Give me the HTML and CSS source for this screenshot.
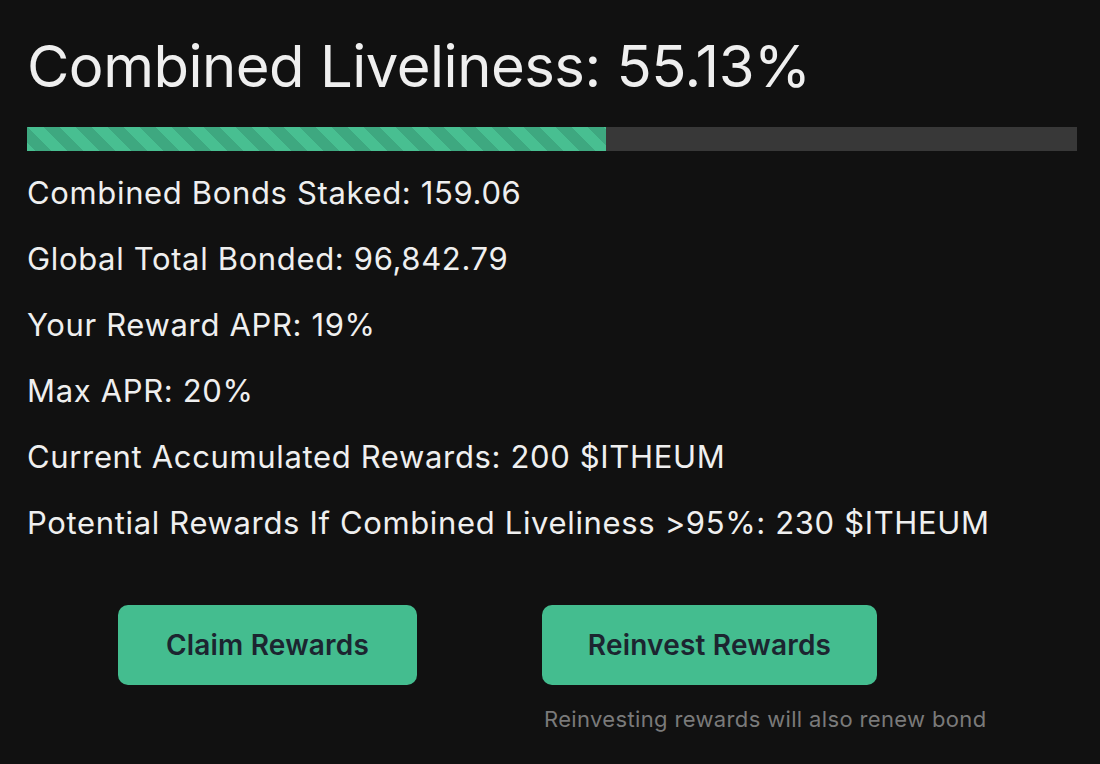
FILE: index.html
```html
<!DOCTYPE html>
<html lang="en">
<head>
<meta charset="utf-8">
<title>Combined Liveliness</title>
<link rel="stylesheet" href="styles.css">
</head>
<body>
<main class="panel">
  <h1 class="title">Combined Liveliness: 55.13%</h1>
  <div class="bar"><div class="bar-fill" style="width: 55.13%"></div></div>
  <ul class="stats">
    <li>Combined Bonds Staked: 159.06</li>
    <li>Global Total Bonded: 96,842.79</li>
    <li>Your Reward APR: 19%</li>
    <li>Max APR: 20%</li>
    <li>Current Accumulated Rewards: 200 $ITHEUM</li>
    <li>Potential Rewards If Combined Liveliness &gt;95%: 230 $ITHEUM</li>
  </ul>
  <div class="actions">
    <div class="action">
      <button class="btn btn-claim">Claim Rewards</button>
    </div>
    <div class="action">
      <button class="btn btn-reinvest">Reinvest Rewards</button>
      <p class="note">Reinvesting rewards will also renew bond</p>
    </div>
  </div>
</main>
</body>
</html>
```

FILE: styles.css
```css
html, body {
  margin: 0;
  padding: 0;
  background: #111111;
}

body {
  font-family: "Inter", "Noto Sans", sans-serif;
  color: #efefef;
}

.panel {
  padding: 30px 23px 0 27px;
}

.title {
  margin: 0;
  font-size: 58px;
  font-weight: 400;
  line-height: 72px;
  letter-spacing: -0.5px;
}

.bar {
  margin-top: 25px;
  height: 24px;
  background: #383838;
}

.bar-fill {
  height: 100%;
  background-color: #3ea880;
  background-image: linear-gradient(45deg,
    #48bf91 25%, transparent 25%,
    transparent 50%, #48bf91 50%,
    #48bf91 75%, transparent 75%, transparent);
  background-size: 32px 32px;
}

.stats {
  list-style: none;
  margin: 9px 0 0;
  padding: 0;
}

.stats li {
  font-size: 31px;
  line-height: 66px;
  letter-spacing: 0.65px;
}

.actions {
  display: flex;
  gap: 125px;
  margin-top: 49px;
  padding-left: 91px;
}

.action {
  display: flex;
  flex-direction: column;
  align-items: flex-start;
}

.btn {
  height: 80px;
  border: none;
  border-radius: 10px;
  background: #44bd8f;
  color: #1c2530;
  font-family: "Inter", "Noto Sans", sans-serif;
  font-size: 28px;
  font-weight: 600;
  letter-spacing: 0.2px;
  padding: 0;
  cursor: pointer;
}

.btn-claim {
  width: 299px;
}

.btn-reinvest {
  width: 335px;
}

.note {
  margin: 19px 0 0 2px;
  font-size: 22px;
  line-height: 30px;
  letter-spacing: 0.35px;
  color: #7a7a7a;
}
```
